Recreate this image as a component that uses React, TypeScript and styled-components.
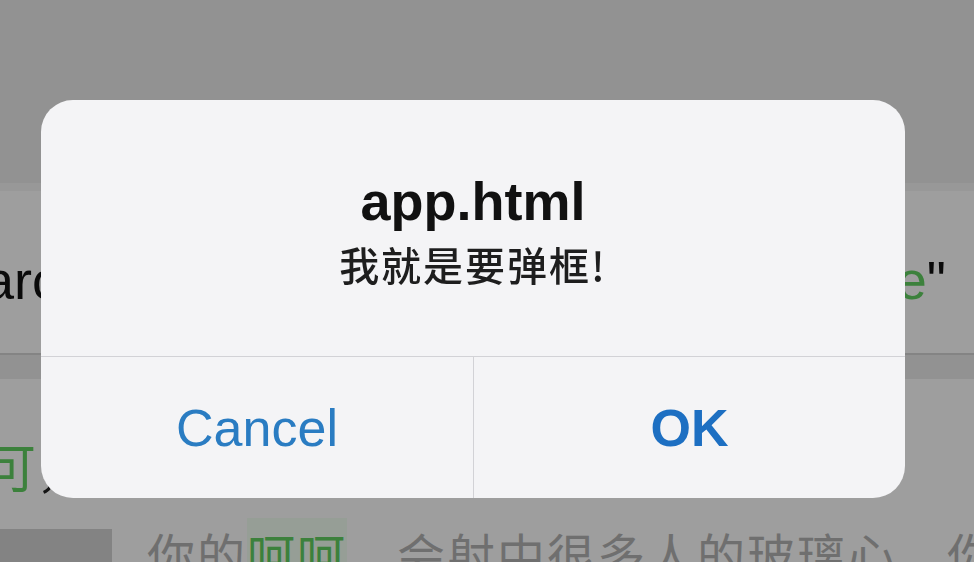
import styled, { createGlobalStyle } from "styled-components";

const GlobalStyle = createGlobalStyle`
  html, body {
    margin: 0;
    padding: 0;
    height: 100%;
    overflow: hidden;
  }
  body {
    font-family: "Liberation Sans", "Noto Sans CJK SC", sans-serif;
  }
`;

const Page = styled.div`
  height: 100vh;
  overflow: hidden;
  background: #ffffff;
  display: flex;
  flex-direction: column;
`;

const TopBar = styled.div`
  height: 183px;
  flex-shrink: 0;
  background: #ececec;
  border-bottom: 8px solid #f6f6f6;
`;

const CodeRow = styled.div`
  height: 164px;
  flex-shrink: 0;
  display: flex;
  justify-content: space-between;
  align-items: center;
  padding: 16px 28px 0 0;
  box-sizing: border-box;
  font-family: "Liberation Sans", sans-serif;
  font-size: 54px;
  line-height: 1;
  color: #111;
  white-space: nowrap;
  border-bottom: 2px solid #d6d6d6;
`;

const CutText = styled.span`
  margin-left: -16px;
`;

const Green = styled.span<{ $tint?: boolean }>`
  color: #62d062;
  background: ${(p) => (p.$tint ? "#f3fff3" : "transparent")};
`;

const Band = styled.div`
  height: 24px;
  flex-shrink: 0;
  background: #ececec;
`;

const TextRow = styled.div`
  height: 144px;
  flex-shrink: 0;
  display: flex;
  align-items: center;
  padding-top: 30px;
  box-sizing: border-box;
  font-family: "Noto Sans CJK SC", sans-serif;
  font-size: 52px;
  line-height: 1;
  color: #222;
  white-space: nowrap;
`;

const BottomRow = styled.div`
  flex: 1;
  display: flex;
  gap: 35px;
  padding-top: 2px;
  white-space: nowrap;
`;

const Block = styled.div`
  width: 112px;
  flex-shrink: 0;
  background: #d4d4d4;
  margin-top: 4px;
`;

const FadedText = styled.div`
  font-family: "Noto Sans CJK SC", sans-serif;
  font-size: 48px;
  letter-spacing: 2px;
  line-height: 1.2;
  color: #b4b4b4;
`;

const Overlay = styled.div`
  position: fixed;
  inset: 0;
  background: rgba(0, 0, 0, 0.38);
  display: flex;
  align-items: flex-start;
  padding: 100px 0 0 41px;
`;

const Alert = styled.div`
  width: 864px;
  height: 398px;
  background: #f4f4f6;
  border-radius: 32px;
  display: flex;
  flex-direction: column;
  overflow: hidden;
`;

const AlertBody = styled.div`
  flex: 1;
  padding-top: 74px;
  text-align: center;
  border-bottom: 1px solid #d2d2d6;
`;

const Title = styled.div`
  font-family: "Liberation Sans", sans-serif;
  font-weight: 700;
  font-size: 54px;
  line-height: 54px;
  color: #111;
`;

const Message = styled.div`
  margin-top: 12px;
  font-family: "Noto Sans CJK SC", sans-serif;
  font-size: 40px;
  font-weight: 500;
  line-height: 48px;
  letter-spacing: 2px;
  color: #1e1e1e;
`;

const ButtonRow = styled.div`
  height: 141px;
  display: grid;
  grid-template-columns: 1fr 1fr;
`;

const ActionButton = styled.button<{ $primary?: boolean }>`
  border: none;
  background: transparent;
  padding: 0;
  font-family: "Liberation Sans", sans-serif;
  font-size: 52px;
  font-weight: ${(p) => (p.$primary ? 700 : 400)};
  color: ${(p) => (p.$primary ? "#1d6fc2" : "#2a7cc2")};
  cursor: pointer;

  & + & {
    border-left: 1px solid #d2d2d6;
  }
`;

export default function App() {
  return (
    <>
      <GlobalStyle />
      <Page>
        <TopBar />
        <CodeRow>
          <CutText>arc</CutText>
          <span>
            <Green>e</Green>"
          </span>
        </CodeRow>
        <Band />
        <TextRow>
          <CutText>
            <Green>可</Green>，
          </CutText>
        </TextRow>
        <BottomRow>
          <Block />
          <FadedText>
            你的<Green $tint>呵呵</Green>，会射中很多人的玻璃心，你每
          </FadedText>
        </BottomRow>
      </Page>
      <Overlay>
        <Alert role="alertdialog">
          <AlertBody>
            <Title>app.html</Title>
            <Message>我就是要弹框!</Message>
          </AlertBody>
          <ButtonRow>
            <ActionButton>Cancel</ActionButton>
            <ActionButton $primary>OK</ActionButton>
          </ButtonRow>
        </Alert>
      </Overlay>
    </>
  );
}
